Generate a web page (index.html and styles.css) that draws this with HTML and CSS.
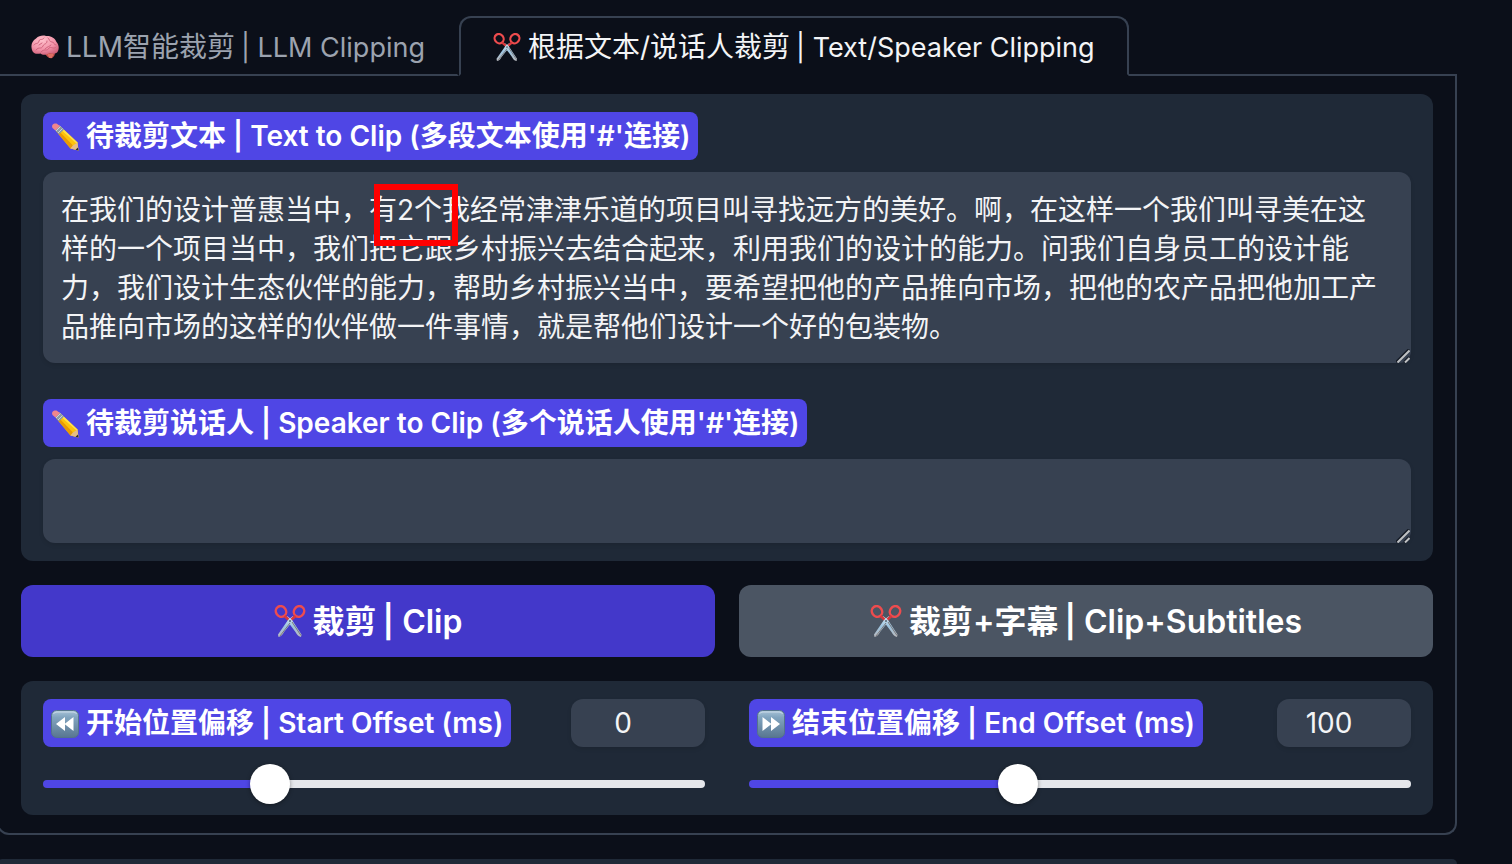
FILE: index.html
```
<!DOCTYPE html>
<html lang="zh-CN">
<head>
    <meta charset="UTF-8">
    <meta name="viewport" content="width=device-width, initial-scale=1.0">
    <title>Text/Speaker Clipping</title>
    <link rel="stylesheet" href="styles.css">
</head>
<body>

    <!-- shared icons -->
    <svg class="icon-defs" aria-hidden="true">
        <defs>
            <linearGradient id="key-fill" x1="0" y1="0" x2="0" y2="1">
                <stop offset="0" stop-color="#a9c3d8"/>
                <stop offset="0.25" stop-color="#82a5c0"/>
                <stop offset="1" stop-color="#587690"/>
            </linearGradient>
            <linearGradient id="blade-fill" x1="0" y1="0" x2="0" y2="1">
                <stop offset="0" stop-color="#d3e7f3"/>
                <stop offset="0.5" stop-color="#9cc4e0"/>
                <stop offset="1" stop-color="#b9b9bd"/>
            </linearGradient>
            <radialGradient id="brain-fill" cx="0.4" cy="0.25" r="0.8">
                <stop offset="0" stop-color="#ffc0cb"/>
                <stop offset="0.6" stop-color="#f292a8"/>
                <stop offset="1" stop-color="#cf5f78"/>
            </radialGradient>
        </defs>
        <symbol id="icon-brain" viewBox="0 0 28 28">
            <path d="M18 19 L23 18.500 C24.500 20 24 23 21 25 C18 26 15 23 14 20 Z" fill="#c9544f"/>
            <path d="M1 17 C-.5 12 1 8 5 5.500 C8 2.500 12 2 15 3 C20 2.500 24 5 25.500 9 C28 12 28.500 16 26.500 19 C24.500 21.500 21 20.500 18.500 20 C15 22.500 11 22 9.500 20.500 C5.500 21.500 2 20.500 1 17 Z" fill="url(#brain-fill)"/>
            <path d="M3 12 C5 9 7 12 8 8 C9 5 11 8 13 5 M5 17 C8 13 10 17 12 13 C13 10 16 12 16 8 M10 19 C13 15 16 19 18 15 C20 13 23 17 25 14 M17 5 C19 6 18 9 21 9 C24 9 22 12 25 12 M8 12 L11 10 M14 16 C17 13 18 14 20 12" fill="none" stroke="#d1667f" stroke-width="1" stroke-linecap="round"/>
            <path d="M17 22 L22 22 M18 24 L21 24" stroke="#f08a7b" stroke-width="1"/>
        </symbol>
        <symbol id="icon-scissors" viewBox="0 0 32 32">
            <path d="M13 11 L18 15 L27.500 29.500 L27 32 C24 31.500 22.500 29 21.500 27 L14 17 Z" fill="url(#blade-fill)"/>
            <path d="M19 11 L14 15 L4 29.500 L4.500 32 C7.500 31.500 9 29 10 27 L18 17 Z" fill="url(#blade-fill)"/>
            <path d="M6 31 L16 18 M27 30.500 L18 17" stroke="#7d797a" stroke-width="1"/>
            <ellipse cx="7" cy="6.500" rx="5" ry="5.500" transform="rotate(-35 7 6.500)" fill="none" stroke="#ee4c4e" stroke-width="2.500"/>
            <ellipse cx="25" cy="6.500" rx="5" ry="5.500" transform="rotate(35 25 6.500)" fill="none" stroke="#ee4c4e" stroke-width="2.500"/>
            <path d="M10.500 11 L14.500 14.500 M21.500 11 L17.500 14.500" stroke="#d7373c" stroke-width="2.500"/>
            <circle cx="16" cy="16" r="1" fill="#5b6670"/>
        </symbol>
        <symbol id="icon-pencil" viewBox="0 0 28 28">
            <path d="M5 8 L9.500 3.500 L26.500 19.500 L27.500 27.500 L19.500 25.500 Z" fill="#fdc30b"/>
            <path d="M5 8 L6.500 6.500 L22 22.500 L19.500 25.500 Z" fill="#e89a05"/>
            <path d="M8 5 L9.500 3.500 L26.500 19.500 L25.500 20.500 Z" fill="#ffe04a"/>
            <path d="M19.500 25.500 L22 22.500 L26.500 19.500 L27.500 27.500 Z" fill="#e6bd86"/>
            <path d="M24.500 26.700 L27 24.500 L27.500 27.500 Z" fill="#2b2b2b"/>
            <path d="M3.500 6.500 L8 2 L13 6.500 L8 11.500 Z" fill="#8b9aa6"/>
            <path d="M5 8 L9.500 3.500 M7 10 L11.500 5.500" stroke="#c8d2d9" stroke-width="1"/>
            <path d="M4.500 7.500 L1.500 5 C0 2 2.500 0 5.500 .5 L9 3 Z" fill="#f0868c"/>
        </symbol>
        <symbol id="icon-rewind" viewBox="0 0 28 28">
            <rect x=".5" y=".5" width="27" height="27" rx="5" fill="url(#key-fill)" stroke="#54738c"/>
            <path d="M2.500 4 Q3 2 6 2 H22 Q25 2 25.500 4" fill="none" stroke="#c9dae7" stroke-width="1"/>
            <path d="M14 7 V21 L5 14 Z M22.500 7 V21 L13.500 14 Z" fill="#fff"/>
        </symbol>
        <symbol id="icon-forward" viewBox="0 0 28 28">
            <rect x=".5" y=".5" width="27" height="27" rx="5" fill="url(#key-fill)" stroke="#54738c"/>
            <path d="M2.500 4 Q3 2 6 2 H22 Q25 2 25.500 4" fill="none" stroke="#c9dae7" stroke-width="1"/>
            <path d="M5.500 7 V21 L14.500 14 Z M14 7 V21 L23 14 Z" fill="#fff"/>
        </symbol>
        <symbol id="icon-grip" viewBox="0 0 14 14">
            <path d="M0 13 L13 0 M8 13 L13 8" stroke="#151b26" stroke-width="2"/>
            <path d="M1.500 13.500 L13.500 1.500 M9 13.500 L13.500 9" stroke="#bfc1c3" stroke-width="2"/>
        </symbol>
    </svg>

    <main class="app">
        <div class="tabs" role="tablist">
            <button type="button" class="tab" role="tab" aria-selected="false"><svg class="icon"><use href="#icon-brain"/></svg>LLM智能裁剪 <span class="en">| LLM Clipping</span></button>
            <button type="button" class="tab selected" role="tab" aria-selected="true"><svg class="icon"><use href="#icon-scissors"/></svg>根据文本/说话人裁剪 <span class="en">| Text/Speaker Clipping</span></button>
            <div class="tab-rest"></div>
        </div>

        <div class="panel" role="tabpanel">
            <div class="group">
                <div class="field">
                    <label for="clip-text" class="chip"><svg class="icon"><use href="#icon-pencil"/></svg>待裁剪文本 | Text to Clip (多段文本使用'#'连接)</label>
                    <div class="text-box">
                        <textarea id="clip-text" class="tall" spellcheck="false">在我们的设计普惠当中，有2个我经常津津乐道的项目叫寻找远方的美好。啊，在这样一个我们叫寻美在这样的一个项目当中，我们把它跟乡村振兴去结合起来，利用我们的设计的能力。问我们自身员工的设计能力，我们设计生态伙伴的能力，帮助乡村振兴当中，要希望把他的产品推向市场，把他的农产品把他加工产品推向市场的这样的伙伴做一件事情，就是帮他们设计一个好的包装物。</textarea>
                        <svg class="grip"><use href="#icon-grip"/></svg>
                        <div class="highlight"></div>
                    </div>
                </div>
                <div class="field">
                    <label for="clip-speaker" class="chip"><svg class="icon"><use href="#icon-pencil"/></svg>待裁剪说话人 | Speaker to Clip (多个说话人使用'#'连接)</label>
                    <div class="text-box">
                        <textarea id="clip-speaker" spellcheck="false"></textarea>
                        <svg class="grip"><use href="#icon-grip"/></svg>
                    </div>
                </div>
            </div>

            <div class="actions">
                <button type="button" class="btn primary"><svg class="icon"><use href="#icon-scissors"/></svg>裁剪 <span class="en">| Clip</span></button>
                <button type="button" class="btn secondary"><svg class="icon"><use href="#icon-scissors"/></svg>裁剪+字幕 <span class="en">| Clip+Subtitles</span></button>
            </div>

            <div class="group offsets">
                <div class="offset">
                    <div class="offset-head">
                        <label for="start-range" class="chip"><svg class="icon"><use href="#icon-rewind"/></svg>开始位置偏移 | Start Offset (ms)</label>
                        <input type="number" class="number" id="start-number" value="0" min="-500" max="1000" aria-label="Start Offset (ms)">
                    </div>
                    <input type="range" class="slider" id="start-range" min="-500" max="1000" step="50" value="0" style="--fill: 33.3%">
                </div>
                <div class="offset">
                    <div class="offset-head">
                        <label for="end-range" class="chip"><svg class="icon"><use href="#icon-forward"/></svg>结束位置偏移 | End Offset (ms)</label>
                        <input type="number" class="number" id="end-number" value="100" min="-500" max="1000" aria-label="End Offset (ms)">
                    </div>
                    <input type="range" class="slider" id="end-range" min="-500" max="1000" step="50" value="100" style="--fill: 40%">
                </div>
            </div>
        </div>

        <div class="next-block"></div>
    </main>

    <script>
        // keep each slider and its number box in step
        function link(name) {
            var range = document.getElementById(name + "-range");
            var number = document.getElementById(name + "-number");

            function paint() {
                var fill = (range.value - range.min) / (range.max - range.min) * 100;
                range.style.setProperty("--fill", fill + "%");
            }

            range.addEventListener("input", function () {
                number.value = range.value;
                paint();
            });
            number.addEventListener("input", function () {
                range.value = number.value;
                paint();
            });
        }

        link("start");
        link("end");
    </script>

</body>
</html>
```
FILE: styles.css
```
* {
    box-sizing: border-box;
}

body {
    margin: 0;
    background-color: #0b0f19;
    color: #f3f4f6;
    font-family: Inter, "Noto Sans CJK SC", sans-serif;
    font-size: 28px;
    line-height: 39px;
    overflow-x: hidden;
}

button,
input,
textarea {
    font: inherit;
    color: inherit;
}

.icon-defs {
    position: absolute;
    width: 0;
    height: 0;
}

.icon {
    width: 28px;
    height: 28px;
    margin-right: 7px;
    flex: none;
}

.app {
    display: flex;
    flex-direction: column;
    min-height: 100vh;
    margin: 0 55px 0 -3px;
    padding-top: 16px;
}

/* tabs */
.tabs {
    display: flex;
}

.tab {
    display: flex;
    align-items: center;
    height: 60px;
    padding: 2px 32px 0;
    border: 2px solid transparent;
    border-bottom-color: #374151;
    background: none;
    color: #9ca3af;
    white-space: nowrap;
}

.tab.selected {
    border-color: #374151;
    border-bottom-color: transparent;
    border-radius: 12px 12px 0 0;
    color: #f3f4f6;
}

.en {
    margin-left: 6px;
}

.tab .en {
    font-size: 27px;
}

.tab-rest {
    flex: 1;
    border-bottom: 2px solid #374151;
}

.panel {
    display: flex;
    flex-direction: column;
    gap: 24px;
    padding: 18px 22px;
    border: 2px solid #374151;
    border-top: none;
    border-radius: 0 0 12px 12px;
}

.group {
    padding: 18px 22px;
    border-radius: 12px;
    background-color: #1f2937;
}

.field + .field {
    margin-top: 36px;
}

.chip {
    display: inline-flex;
    align-items: center;
    height: 48px;
    padding: 1px 8px 0;
    border-radius: 8px;
    background-color: #4f46e5;
    color: #fff;
    font-weight: 600;
    white-space: nowrap;
    vertical-align: top;
}

.text-box {
    position: relative;
    margin-top: 12px;
}

textarea {
    display: block;
    width: 100%;
    height: 84px;
    padding: 19px 18px 16px;
    border: none;
    border-radius: 12px;
    outline: none;
    background-color: #374151;
    box-shadow: 0 2px 4px rgba(0, 0, 0, 0.1);
    resize: none;
    overflow: hidden;
}

textarea.tall {
    height: 191px;
}

.grip {
    position: absolute;
    right: 1px;
    bottom: 0;
    width: 14px;
    height: 14px;
}

.highlight {
    position: absolute;
    left: 331px;
    top: 12px;
    width: 84px;
    height: 62px;
    border: 6px solid #f00;
    pointer-events: none;
}

/* buttons */
.actions {
    display: grid;
    grid-template-columns: 1fr 1fr;
    gap: 24px;
}

.btn {
    display: flex;
    align-items: center;
    justify-content: center;
    height: 72px;
    border: none;
    border-radius: 12px;
    color: #fff;
    font-size: 32px;
    font-weight: 600;
}

.btn .icon {
    width: 32px;
    height: 32px;
}

.primary {
    background-color: #4338ca;
}

.secondary {
    background-color: #4b5563;
}

/* offsets */
.offsets {
    display: grid;
    grid-template-columns: 1fr 1fr;
    gap: 44px;
}

.offset-head {
    display: flex;
    justify-content: space-between;
}

.number {
    width: 134px;
    height: 48px;
    padding: 0 30px 0 0;
    border: none;
    border-radius: 12px;
    background-color: #374151;
    box-shadow: 0 2px 4px rgba(0, 0, 0, 0.1);
    text-align: center;
    appearance: textfield;
}

.number::-webkit-inner-spin-button {
    appearance: none;
    margin: 0;
}

.slider {
    display: block;
    width: 100%;
    height: 8px;
    margin: 33px 0 9px;
    border-radius: 4px;
    background: linear-gradient(to right, #4f46e5 var(--fill), #e5e7eb var(--fill));
    appearance: none;
}

.slider::-webkit-slider-thumb {
    appearance: none;
    width: 40px;
    height: 40px;
    border-radius: 50%;
    background-color: #fff;
    box-shadow: 0 1px 4px rgba(0, 0, 0, 0.4);
}

.next-block {
    flex: 1;
    margin-top: 24px;
    border-radius: 12px 12px 0 0;
    background-color: #1f2937;
}
```
